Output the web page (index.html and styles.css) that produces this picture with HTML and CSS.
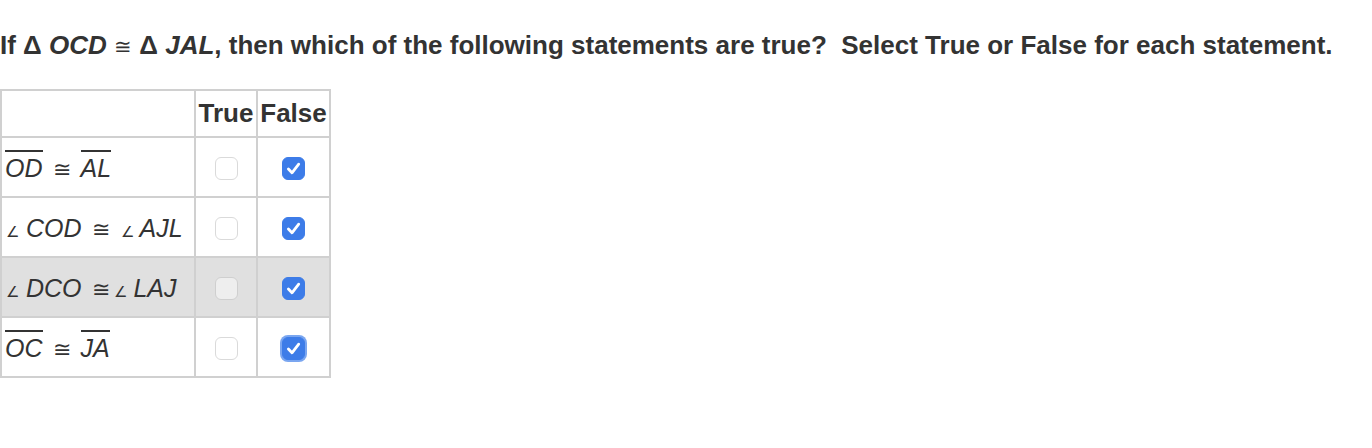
FILE: index.html
```html
<!DOCTYPE html>
<html>
<head>
<meta charset="utf-8">
<link rel="stylesheet" href="styles.css">
</head>
<body>
<p class="question">If Δ <i>OCD</i> <span class="cong">≅</span> Δ <i>JAL</i>, then which of the following statements are true?&nbsp; Select True or False for each statement.</p>
<table class="grid">
  <thead>
    <tr><th class="stmt"></th><th class="opt t">True</th><th class="opt f">False</th></tr>
  </thead>
  <tbody>
    <tr>
      <td class="stmt"><span class="seg">OD</span><span class="rel">≅</span><span class="seg">AL</span></td>
      <td class="opt"><span class="box"></span></td>
      <td class="opt"><span class="box on"><svg viewBox="0 0 23 23"><path d="M6.4 12.1l3.6 3.7 6.7-8.6"/></svg></span></td>
    </tr>
    <tr>
      <td class="stmt"><span class="ang">∠</span> COD<span class="rel">≅</span><span class="ang">∠</span> AJL</td>
      <td class="opt"><span class="box"></span></td>
      <td class="opt"><span class="box on"><svg viewBox="0 0 23 23"><path d="M6.4 12.1l3.6 3.7 6.7-8.6"/></svg></span></td>
    </tr>
    <tr class="hover">
      <td class="stmt"><span class="ang">∠</span> DCO<span class="rel tight">≅</span><span class="ang">∠</span> LAJ</td>
      <td class="opt"><span class="box"></span></td>
      <td class="opt"><span class="box on"><svg viewBox="0 0 23 23"><path d="M6.4 12.1l3.6 3.7 6.7-8.6"/></svg></span></td>
    </tr>
    <tr>
      <td class="stmt"><span class="seg">OC</span><span class="rel">≅</span><span class="seg">JA</span></td>
      <td class="opt"><span class="box"></span></td>
      <td class="opt"><span class="box on focus"><svg viewBox="0 0 23 23"><path d="M6.4 12.1l3.6 3.7 6.7-8.6"/></svg></span></td>
    </tr>
  </tbody>
</table>
</body>
</html>
```
FILE: styles.css
```css
html, body {
  margin: 0;
  padding: 0;
  background: #fff;
}
body {
  font-family: "Liberation Sans", Arial, sans-serif;
  color: #333;
}
.question {
  margin: 0;
  padding-top: 29px;
  font-size: 26px;
  font-weight: bold;
  line-height: 32px;
  white-space: nowrap;
}
.question .cong {
  font-weight: normal;
  font-size: 21px;
}
.grid {
  margin-top: 26px;
  margin-left: 0;
  border-collapse: collapse;
  font-size: 25px;
}
.grid th, .grid td {
  border: 2px solid #d0d0d0;
  padding: 0;
}
.grid th {
  height: 45px;
  font-size: 26px;
  font-weight: bold;
  text-align: center;
}
.grid th.stmt { width: 192px; }
.grid th.t { width: 60px; }
.grid th.f { width: 71px; }
.grid td {
  height: 58px;
}
.grid td.stmt {
  font-style: italic;
  height: 55px;
  padding-left: 3px;
  padding-top: 3px;
  white-space: nowrap;
}
.grid td.opt {
  text-align: center;
}
.grid tr.hover td {
  background: #e0e0e0;
}
.seg {
  border-top: 2px solid #333;
  padding-top: 2px;
}
.rel {
  font-style: normal;
  font-size: 22px;
  margin: 0 10px 0 10px;
}
.rel.tight {
  margin: 0 3px 0 10px;
}
.ang {
  font-style: normal;
  font-size: 15px;
  margin-left: 1px;
}
.box {
  display: inline-block;
  width: 23px;
  height: 23px;
  box-sizing: border-box;
  border: 1px solid #dadada;
  border-radius: 6px;
  background: #fff;
  vertical-align: middle;
}
.hover .box {
  background: #eeeeee;
  border-color: #cfcfcf;
}
.box.on,
.hover .box.on {
  background: #3d7ce8;
  border-color: #3d7ce8;
}
.box.focus {
  box-shadow: 0 0 0 2px #7aa6f0;
}
.box svg {
  display: block;
  margin: -1px;
  width: 23px;
  height: 23px;
}
.box svg path {
  fill: none;
  stroke: #fff;
  stroke-width: 2.8;
  stroke-linecap: round;
  stroke-linejoin: round;
}
```
